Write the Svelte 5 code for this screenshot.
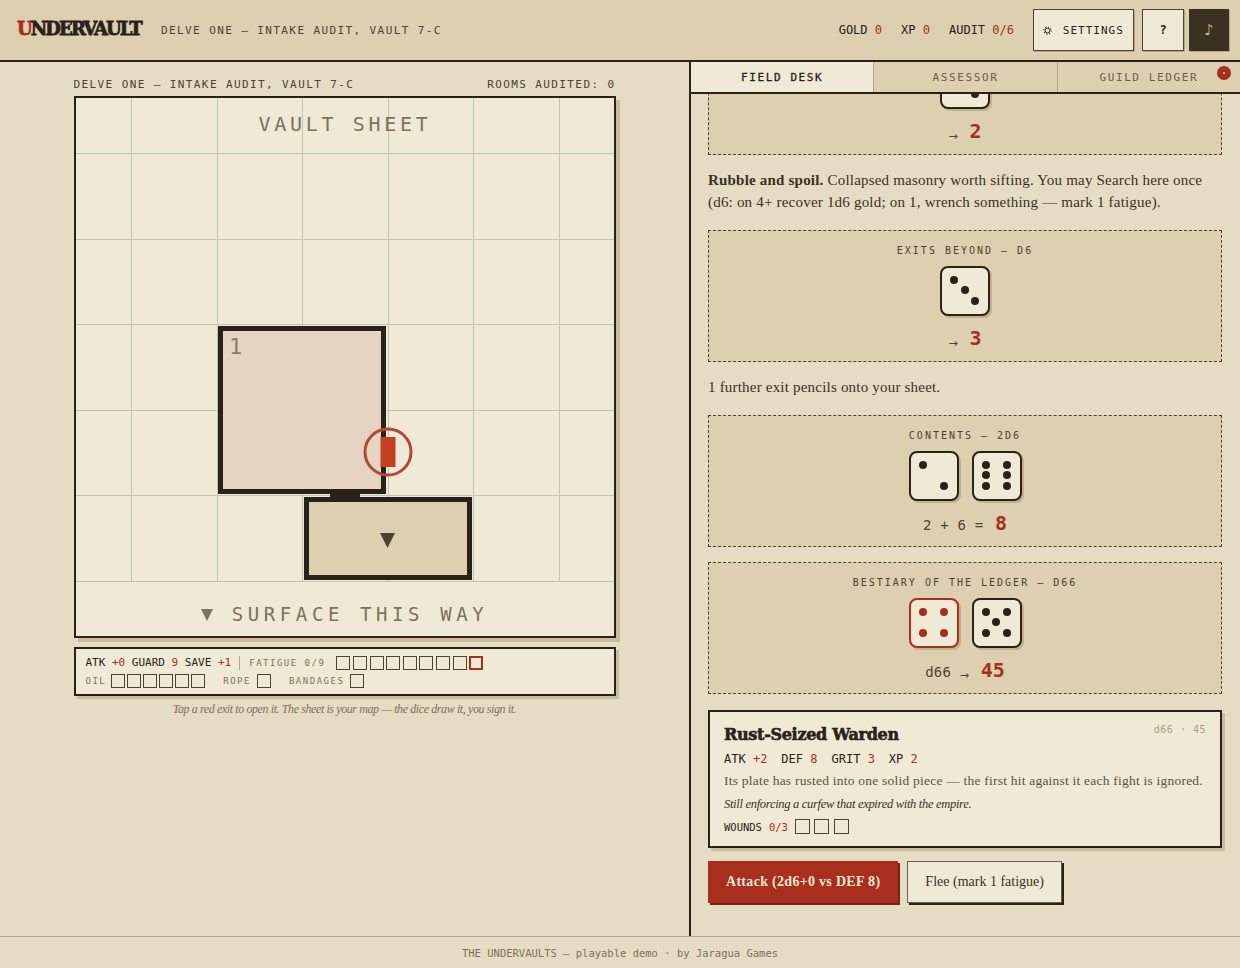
<script>
  const cols = [55.5, 141.5, 226.5, 312.5, 397.5, 483.5];
  const rows = [55.5, 141.5, 226.5, 312.5, 397.5, 483.5];

  const pips = {
    2: [[0, 0], [2, 2]],
    3: [[0, 0], [1, 1], [2, 2]],
    4: [[0, 0], [2, 0], [0, 2], [2, 2]],
    5: [[0, 0], [2, 0], [1, 1], [0, 2], [2, 2]],
    6: [[0, 0], [2, 0], [0, 1], [2, 1], [0, 2], [2, 2]]
  };

  function toBottom(el) {
    el.scrollTop = el.scrollHeight;
  }
</script>

{#snippet die(n, hot = false)}
  <div class="die" class:hot>
    {#each pips[n] as p}
      <span class="pip" style="--x:{p[0]};--y:{p[1]}"></span>
    {/each}
  </div>
{/snippet}

{#snippet boxes(n, lastHot = false)}
  <span class="boxes">
    {#each Array(n) as _, i}
      <span class="box" class:hot={lastHot && i === n - 1}></span>
    {/each}
  </span>
{/snippet}

<div class="page">
  <header class="topbar">
    <div class="brand"><span class="u">U</span>NDERVAULT</div>
    <div class="subtitle">DELVE ONE — INTAKE AUDIT, VAULT 7-C</div>
    <div class="stats">
      <span>GOLD <b>0</b></span>
      <span>XP <b>0</b></span>
      <span>AUDIT <b>0/6</b></span>
    </div>
    <button class="tool settings">
      <svg class="gear" viewBox="0 0 10 10" width="9" height="9">
        <circle cx="5" cy="5" r="2.6" fill="none" stroke="#2a2118" stroke-width="1" />
        <circle cx="5" cy="5" r="4" fill="none" stroke="#2a2118" stroke-width="1.2" stroke-dasharray="1.3 1.84" />
      </svg>
      SETTINGS
    </button>
    <button class="tool help">?</button>
    <button class="tool music">♪</button>
  </header>

  <main class="split">
    <section class="left">
      <div class="column">
        <div class="sheet-head">
          <span>DELVE ONE — INTAKE AUDIT, VAULT 7-C</span>
          <span>ROOMS AUDITED: 0</span>
        </div>

        <div class="sheet">
          <svg viewBox="0 0 538 538" width="538" height="538">
            {#each cols as x}
              <line x1={x} y1="0" x2={x} y2="483" class="grid" />
            {/each}
            {#each rows as y}
              <line x1="0" y1={y} x2="538" y2={y} class="grid" />
            {/each}
            <text x="269" y="33" class="sheet-title" text-anchor="middle">VAULT SHEET</text>

            <rect x="144.5" y="230.5" width="163" height="163" class="room" />
            <text x="153" y="256" class="room-num">1</text>

            <rect x="230.5" y="401.5" width="163" height="78" class="room stairs" />
            <rect x="254" y="393" width="30" height="8" fill="#2a2118" />
            <polygon points="304,435 319,435 311.5,450" fill="#4d4330" />

            <circle cx="312" cy="354" r="23" class="ring" />
            <rect x="304.5" y="339" width="15" height="30" fill="#c5401f" />

            <polygon points="125,511 137,511 131,523" fill="#7d725c" />
            <text x="284" y="523" class="surface" text-anchor="middle">SURFACE THIS WAY</text>
          </svg>
        </div>

        <div class="charbar">
          <div class="bar-row">
            <span class="stat">ATK <b>+0</b> GUARD <b>9</b> SAVE <b>+1</b></span>
            <span class="divider"></span>
            <span class="tag fatigue">FATIGUE 0/9</span>
            <span class="fat">{@render boxes(9, true)}</span>
          </div>
          <div class="bar-row">
            <span class="tag oil">OIL</span>
            {@render boxes(6)}
            <span class="tag rope">ROPE</span>
            {@render boxes(1)}
            <span class="tag rope">BANDAGES</span>
            {@render boxes(1)}
          </div>
        </div>

        <p class="hint">Tap a red exit to open it. The sheet is your map — the dice draw it, you sign it.</p>
      </div>
    </section>

    <section class="right">
      <nav class="tabs">
        <div class="tab active">FIELD DESK</div>
        <div class="tab">ASSESSOR</div>
        <div class="tab">GUILD LEDGER<span class="dot"></span></div>
      </nav>

      <div class="desk" use:toBottom>
        <div class="roll first">
          <div class="roll-label">EXITS BEYOND — D6</div>
          <div class="dice">{@render die(2)}</div>
          <div class="result"><i>→</i> <strong>2</strong></div>
        </div>

        <p class="prose loose"><strong>Rubble and spoil.</strong> Collapsed masonry worth sifting. You may Search here once (d6: on 4+ recover 1d6 gold; on 1, wrench something — mark 1 fatigue).</p>

        <div class="roll first">
          <div class="roll-label">EXITS BEYOND — D6</div>
          <div class="dice">{@render die(3)}</div>
          <div class="result"><i>→</i> <strong>3</strong></div>
        </div>

        <p class="prose">1 further exit pencils onto your sheet.</p>

        <div class="roll">
          <div class="roll-label">CONTENTS — 2D6</div>
          <div class="dice">{@render die(2)}{@render die(6)}</div>
          <div class="result">2 + 6 = <strong>8</strong></div>
        </div>

        <div class="roll">
          <div class="roll-label">BESTIARY OF THE LEDGER — D66</div>
          <div class="dice">{@render die(4, true)}{@render die(5)}</div>
          <div class="result">d66 <i>→</i> <strong>45</strong></div>
        </div>

        <article class="monster">
          <div class="monster-ref">d66 · 45</div>
          <h2>Rust-Seized Warden</h2>
          <div class="monster-stats">
            <span>ATK <b>+2</b></span><span>DEF <b>8</b></span><span>GRIT <b>3</b></span><span>XP <b>2</b></span>
          </div>
          <p class="trait">Its plate has rusted into one solid piece — the first hit against it each fight is ignored.</p>
          <p class="flavor">Still enforcing a curfew that expired with the empire.</p>
          <div class="wounds">WOUNDS <b>0/3</b> <span class="big">{@render boxes(3)}</span></div>
        </article>

        <div class="actions">
          <button class="act primary">Attack (2d6+0 vs DEF 8)</button>
          <button class="act">Flee (mark 1 fatigue)</button>
        </div>
      </div>
    </section>
  </main>

  <footer class="foot">THE UNDERVAULTS — playable demo · by Jaragua Games</footer>
</div>

<style>
  :global(body) {
    margin: 0;
    background: #e6dcc3;
  }

  .page {
    --ink: #2a2118;
    --paper: #f0e9d6;
    --tan: #dcd0b0;
    --red: #a82f1e;
    --muted: #7d725c;
    --mono: "DejaVu Sans Mono", "Liberation Mono", monospace;
    --serif: "Liberation Serif", serif;
    height: 968px;
    display: flex;
    flex-direction: column;
    overflow: hidden;
    color: var(--ink);
    font-family: var(--mono);
  }

  b {
    font-weight: 400;
    color: var(--red);
  }

  /* top bar */
  .topbar {
    height: 60px;
    flex: none;
    display: flex;
    align-items: center;
    padding: 0 11px 0 17px;
    background: var(--tan);
    border-bottom: 2px solid var(--ink);
  }

  .brand {
    font-family: "DejaVu Serif", serif;
    font-weight: 700;
    font-size: 18px;
    letter-spacing: -1.9px;
    -webkit-text-stroke: 0.8px var(--ink);
    width: 144px;
    margin-top: -3px;
    white-space: nowrap;
  }

  .brand .u {
    color: var(--red);
    -webkit-text-stroke-color: var(--red);
  }

  .subtitle {
    font-size: 11px;
    letter-spacing: 1.4px;
    color: #4d4330;
  }

  .stats {
    margin-left: auto;
    display: flex;
    gap: 19px;
    font-size: 12px;
    margin-right: 19px;
  }

  .tool {
    height: 42px;
    padding: 0;
    background: var(--paper);
    border: 1px solid #4d4330;
    box-shadow: 1px 1px 0 #b3a685;
    font-family: var(--mono);
    color: var(--ink);
    font-size: 11px;
  }

  .settings {
    width: 101px;
    letter-spacing: 1px;
    margin-right: 8px;
  }

  .gear {
    display: inline-block;
    vertical-align: -1px;
    margin-right: 3px;
  }

  .help {
    width: 42px;
    font-weight: 700;
    font-size: 12px;
    margin-right: 5px;
  }

  .music {
    width: 40px;
    background: #3a3122;
    border-color: #3a3122;
    color: #c9b677;
    font-size: 15px;
    font-family: "DejaVu Sans", sans-serif;
  }

  /* main split */
  .split {
    flex: 1;
    min-height: 0;
    display: flex;
  }

  .left {
    width: 689px;
    flex: none;
    border-right: 2px solid var(--ink);
    display: flex;
    justify-content: center;
  }

  .column {
    width: 542px;
    padding-top: 16px;
  }

  .sheet-head {
    display: flex;
    justify-content: space-between;
    font-size: 11px;
    letter-spacing: 1.4px;
    line-height: 13px;
    color: #4d4330;
    margin-bottom: 5px;
  }

  .sheet {
    width: 538px;
    height: 538px;
    border: 2px solid var(--ink);
    background: var(--paper);
    box-shadow: 4px 4px 0 #c9bd9d;
  }

  svg {
    display: block;
  }

  .grid {
    stroke: #bcc8b2;
    stroke-width: 1;
  }

  .sheet-title {
    font-family: var(--mono);
    font-size: 20px;
    letter-spacing: 3.7px;
    fill: #7d725c;
  }

  .room {
    fill: #e6d3c1;
    stroke: #2a2118;
    stroke-width: 5;
  }

  .stairs {
    fill: #dcd0b0;
  }

  .room-num {
    font-family: var(--mono);
    font-size: 22px;
    fill: #8a7d68;
  }

  .ring {
    fill: none;
    stroke: #b04a38;
    stroke-width: 3;
  }

  .surface {
    font-family: var(--mono);
    font-size: 19px;
    letter-spacing: 4.6px;
    fill: #7d725c;
  }

  /* character strip */
  .charbar {
    box-sizing: border-box;
    margin-top: 9px;
    height: 49px;
    border: 2px solid var(--ink);
    background: var(--paper);
    box-shadow: 3px 3px 0 #c9bd9d;
    padding: 6px 10px;
    display: flex;
    flex-direction: column;
    gap: 3px;
  }

  .bar-row {
    display: flex;
    align-items: center;
    height: 16px;
  }

  .stat {
    font-size: 11px;
    white-space: nowrap;
  }

  .divider {
    width: 1px;
    height: 14px;
    background: #b3a685;
    margin: 0 8px;
  }

  .tag {
    font-size: 9px;
    letter-spacing: 1.5px;
    color: var(--muted);
    white-space: nowrap;
  }

  .tag.fatigue {
    margin-left: 1px;
    margin-right: 11px;
  }

  .tag.oil {
    margin-right: 5px;
  }

  .tag.rope {
    margin-left: 18px;
    margin-right: 6px;
  }

  .boxes {
    display: inline-flex;
    gap: 2px;
  }

  .fat {
    display: inline-flex;
  }

  .fat .boxes {
    gap: 2.6px;
  }

  .box {
    box-sizing: border-box;
    width: 14px;
    height: 14px;
    border: 1.5px solid #4d4330;
  }

  .box.hot {
    border: 2px solid var(--red);
  }

  .big {
    display: inline-flex;
  }

  .big .boxes {
    gap: 4.5px;
  }

  .big .box {
    width: 15px;
    height: 15px;
    border-width: 1px;
  }

  .hint {
    margin: 6px 0 0;
    text-align: center;
    font-family: var(--serif);
    font-style: italic;
    font-size: 12px;
    letter-spacing: -0.4px;
    color: var(--muted);
  }

  /* right pane */
  .right {
    flex: 1;
    min-width: 0;
    display: flex;
    flex-direction: column;
  }

  .tabs {
    flex: none;
    display: flex;
    height: 30px;
    background: var(--tan);
    border-bottom: 2px solid var(--ink);
  }

  .tab {
    flex: 1;
    position: relative;
    display: flex;
    align-items: center;
    justify-content: center;
    padding-top: 1px;
    font-size: 11px;
    letter-spacing: 1.6px;
    color: #6b604a;
    border-left: 1px solid #b3a685;
  }

  .tab:first-child {
    border-left: none;
  }

  .tab.active {
    background: var(--paper);
    color: var(--ink);
    -webkit-text-stroke: 0.3px var(--ink);
  }

  .dot {
    position: absolute;
    right: 9px;
    top: 4px;
    width: 14px;
    height: 14px;
    border-radius: 50%;
    background: var(--red);
  }

  .dot::after {
    content: "";
    position: absolute;
    left: 6px;
    top: 6px;
    width: 2px;
    height: 2px;
    border-radius: 50%;
    background: #f0e9d6;
  }

  .desk {
    flex: 1;
    min-height: 0;
    overflow-y: auto;
    scrollbar-width: none;
    padding: 16px 18px 33px 17px;
    display: flex;
    flex-direction: column;
  }

  .roll {
    flex: none;
    box-sizing: border-box;
    height: 132px;
    border: 1px dashed #4d4330;
    background: var(--tan);
    display: flex;
    flex-direction: column;
    align-items: center;
    padding-top: 14px;
    margin-bottom: 15px;
  }

  .roll.first {
    margin-bottom: 14px;
  }

  .roll-label {
    font-size: 10px;
    letter-spacing: 2px;
    line-height: 12px;
    color: #4d4330;
  }

  .dice {
    display: flex;
    gap: 13px;
    margin-top: 8.5px;
  }

  .die {
    box-sizing: border-box;
    position: relative;
    width: 50px;
    height: 50px;
    border: 2px solid var(--ink);
    border-radius: 8px;
    background: var(--paper);
    box-shadow: 2px 2px 0 #bfb290;
  }

  .die.hot {
    border-color: var(--red);
  }

  .pip {
    position: absolute;
    width: 8px;
    height: 8px;
    border-radius: 50%;
    background: var(--ink);
    left: calc(8px + var(--x) * 10.5px);
    top: calc(8px + var(--y) * 10.5px);
  }

  .die.hot .pip {
    background: var(--red);
  }

  .result {
    margin-top: 11px;
    line-height: 22px;
    font-size: 14px;
    letter-spacing: 0.2px;
    color: #4d4330;
  }

  .result i {
    font-style: normal;
    font-size: 11px;
    font-family: "DejaVu Sans", sans-serif;
    position: relative;
    top: 2px;
  }

  .result strong {
    font-size: 20px;
    font-weight: 700;
    letter-spacing: 0;
    color: var(--red);
    margin-left: 3px;
  }

  .prose {
    margin: 0 0 17px;
    font-family: var(--serif);
    font-size: 15px;
    line-height: 22px;
    letter-spacing: 0.2px;
    color: #3a3122;
  }

  .monster {
    flex: none;
    box-sizing: border-box;
    position: relative;
    height: 138px;
    border: 2px solid var(--ink);
    background: var(--paper);
    box-shadow: 3px 3px 0 #c9bd9d;
    padding: 12px 14px;
    margin-top: 1px;
  }

  .monster-ref {
    position: absolute;
    right: 14px;
    top: 12px;
    font-size: 10px;
    letter-spacing: 0.5px;
    color: #a89c84;
  }

  h2 {
    margin: 0;
    font-family: "DejaVu Serif", serif;
    font-size: 16px;
    line-height: 22px;
    letter-spacing: -0.3px;
    -webkit-text-stroke: 0.6px var(--ink);
    font-weight: 700;
  }

  .monster-stats {
    display: flex;
    gap: 14px;
    font-size: 12px;
    line-height: 14px;
    margin-top: 6px;
  }

  .trait {
    margin: 5px 0 0;
    font-family: var(--serif);
    font-size: 13.5px;
    line-height: 20px;
    letter-spacing: 0.22px;
    white-space: nowrap;
    color: #5e5341;
  }

  .flavor {
    margin: 3px 0 0;
    font-family: var(--serif);
    font-style: italic;
    font-size: 12.5px;
    line-height: 20px;
    letter-spacing: -0.3px;
    color: #3a3122;
  }

  .wounds {
    display: flex;
    align-items: center;
    gap: 7px;
    font-size: 10.5px;
    margin-top: 5px;
  }

  .actions {
    display: flex;
    gap: 9px;
    margin-top: 13px;
  }

  .act {
    flex: none;
    height: 42px;
    padding: 0 17px;
    font-family: var(--serif);
    font-size: 14px;
    color: #3a3122;
    background: var(--paper);
    border: 1px solid #6b604a;
    box-shadow: 2px 2px 0 var(--ink);
  }

  .act.primary {
    background: var(--red);
    border-color: var(--red);
    color: #f0e9d6;
    font-weight: 700;
    letter-spacing: 0.3px;
    box-shadow: 2px 2px 0 #7c2214;
  }

  .foot {
    flex: none;
    height: 31px;
    border-top: 1px solid #b3a685;
    display: flex;
    align-items: center;
    justify-content: center;
    font-size: 10.5px;
    color: var(--muted);
  }
</style>
